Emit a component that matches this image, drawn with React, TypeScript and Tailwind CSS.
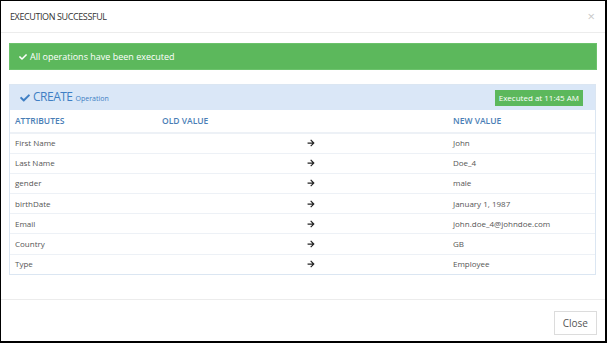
import React from 'react';
import { FaCheck, FaArrowRight } from 'react-icons/fa';

const rows: { attr: string; value: string }[] = [
  { attr: 'First Name', value: 'John' },
  { attr: 'Last Name', value: 'Doe_4' },
  { attr: 'gender', value: 'male' },
  { attr: 'birthDate', value: 'January 1, 1987' },
  { attr: 'Email', value: 'john.doe_4@johndoe.com' },
  { attr: 'Country', value: 'GB' },
  { attr: 'Type', value: 'Employee' },
];

export default function App() {
  return (
    <div className="w-[607px] h-[343px] bg-black pl-px pt-px pr-[2px] pb-[2px] font-['Open_Sans',sans-serif]">
      <div className="flex flex-col w-full h-full bg-white">
        <div className="flex justify-between items-center h-[32px] pl-[9px] pr-[10px] border-b border-[#ececec]">
          <h1 className="text-[9px] tracking-[-0.4px] text-[#333]">EXECUTION SUCCESSFUL</h1>
          <span className="text-[13px] leading-none text-[#c8c8c8]">×</span>
        </div>

        <div className="flex-1 px-[8px] pt-[10px]">
          <div className="flex items-center gap-[3px] h-[27px] px-[9px] bg-[#5cb85c] border border-[#6cc26c] text-white text-[9px]">
            <FaCheck className="w-[8px] h-[8px]" />
            <span>All operations have been executed</span>
          </div>

          <div className="mt-[14px] mr-[1px] border border-[#dbe6f2]">
            <div className="flex justify-between items-center h-[25px] pl-[10px] pr-[12px] bg-[#dae7f7]">
              <div className="flex items-baseline gap-[3px] text-[#3f7fc4]">
                <FaCheck className="w-[10px] h-[10px] self-center" />
                <span className="text-[12px] tracking-[-0.5px] leading-none">CREATE</span>
                <span className="text-[7px]">Operation</span>
              </div>
              <span className="px-[4px] py-[2px] bg-[#5cb85c] text-white text-[8px] leading-[12px]">
                Executed at 11:45 AM
              </span>
            </div>
            <table className="w-full border-collapse text-[8px] text-[#555]">
              <thead>
                <tr className="h-[23px] border-b-2 border-[#edf1f6] text-[#4a7eb6] text-left">
                  <th className="pl-[5px] w-[152px] text-[8.5px] font-semibold">ATTRIBUTES</th>
                  <th className="w-[291px] text-[8.5px] font-semibold">OLD VALUE</th>
                  <th className="text-[8.5px] font-semibold">NEW VALUE</th>
                </tr>
              </thead>
              <tbody>
                {rows.map((r, i) => (
                  <tr key={r.attr} className={`h-[20.2px] ${i < rows.length - 1 ? 'border-b border-[#edf1f6]' : ''}`}>
                    <td className="pl-[5px]">{r.attr}</td>
                    <td>
                      <div className="pl-[145px]">
                        <FaArrowRight className="w-[8px] h-[8px] text-[#222]" />
                      </div>
                    </td>
                    <td>{r.value}</td>
                  </tr>
                ))}
              </tbody>
            </table>
          </div>
        </div>

        <div className="flex justify-end h-[42px] pt-[11px] pr-[8px] border-t border-[#ececec]">
          <button className="h-[24px] px-[8px] border border-[#dcdcdc] bg-white text-[10px] text-[#555]">
            Close
          </button>
        </div>
      </div>
    </div>
  );
}
